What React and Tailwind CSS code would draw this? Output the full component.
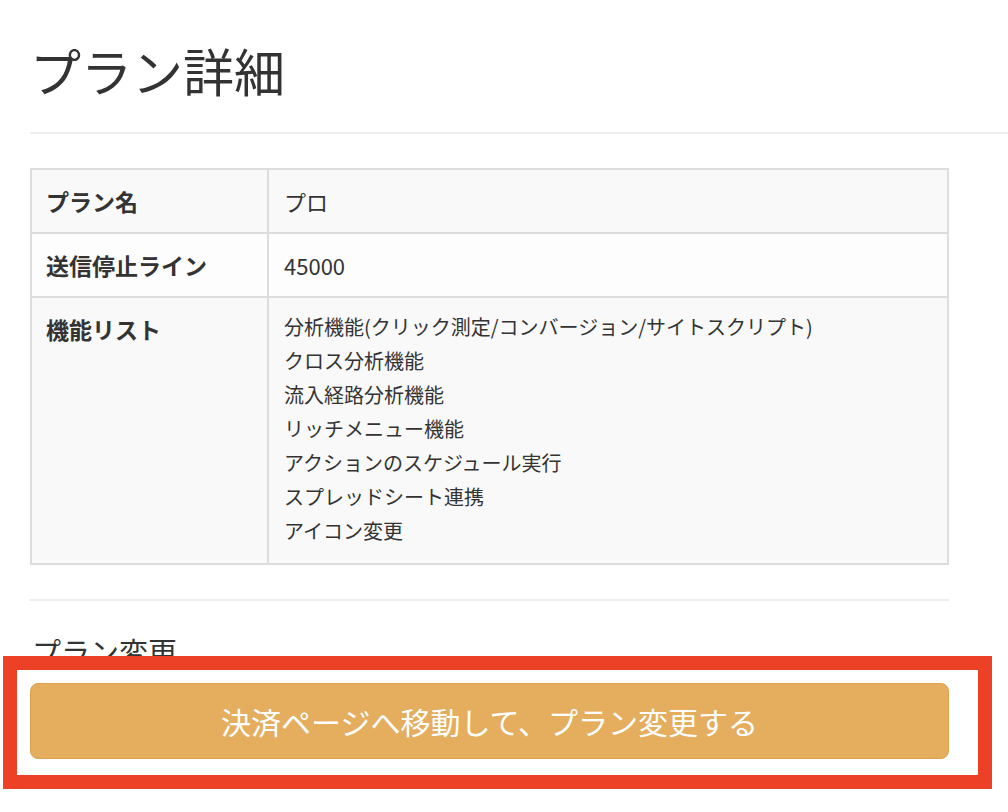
import React from 'react';

const features = [
  '分析機能(クリック測定/コンバージョン/サイトスクリプト)',
  'クロス分析機能',
  '流入経路分析機能',
  'リッチメニュー機能',
  'アクションのスケジュール実行',
  'スプレッドシート連携',
  'アイコン変更',
];

const font = { fontFamily: '"Noto Sans CJK JP", "Noto Sans", sans-serif' };

const Row = ({ label, children, striped }) => (
  <div className={`grid grid-cols-[237px_1fr] border-t-2 border-[#dddddd] first:border-t-0 ${striped ? 'bg-[#f9f9f9]' : 'bg-[#fdfdfd]'}`}>
    <div className="px-[14px] py-[15px] text-[23px] leading-[32px] font-bold text-[#333333] border-r-2 border-[#dddddd]">
      {label}
    </div>
    <div className="px-[15px]">{children}</div>
  </div>
);

export default function App() {
  return (
    <div className="relative min-h-[812px] bg-white text-[#333333] overflow-hidden" style={font}>
      <div className="pl-[30px] pt-[40px]">
        <h1 className="text-[51px] leading-[60px] font-normal">プラン詳細</h1>
        <div className="mt-[32px] h-[2px] bg-[#eeeeee]" />

        <div className="w-[919px] mt-[34px]">
          <div className="border-2 border-[#dddddd]">
            <Row label="プラン名" striped>
              <div className="py-[15px] text-[22px] leading-[32px]">プロ</div>
            </Row>
            <Row label="送信停止ライン">
              <div className="py-[15px] text-[22px] leading-[32px]">45000</div>
            </Row>
            <Row label="機能リスト" striped>
              <ul className="pt-[12px] pb-[15px] text-[20px] leading-[34px]">
                {features.map((f) => (
                  <li key={f}>{f}</li>
                ))}
              </ul>
            </Row>
          </div>

          <div className="mt-[34px] h-[2px] bg-[#eeeeee]" />

          <h2 className="mt-[30px] pl-[2px] text-[29px] leading-[40px] font-normal">プラン変更</h2>

          <button className="mt-[12px] w-full h-[76px] rounded-[8px] bg-[#e5ad5e] border border-[#dea24c] text-white text-[30px] leading-[40px]">
            決済ページへ移動して、プラン変更する
          </button>
        </div>
      </div>

      <div className="absolute left-[3px] top-[656px] w-[989px] h-[133px] border-[14px] border-[#ec4027] pointer-events-none" />
    </div>
  );
}
